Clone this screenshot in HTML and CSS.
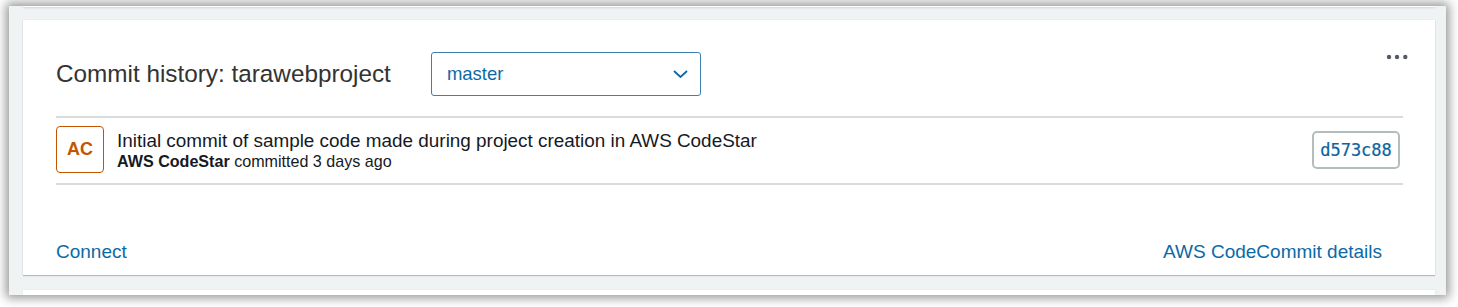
FILE: index.html
```html
<!DOCTYPE html>
<html>
<head>
<meta charset="utf-8">
<link rel="stylesheet" href="styles.css">
</head>
<body>
<div class="frame">
  <div class="prev-card"></div>
  <section class="card">
    <header class="card-header">
      <div class="title-group">
        <h2 class="title">Commit history: tarawebproject</h2>
        <div class="select">
          <span class="select-value">master</span>
          <svg class="chevron" width="15" height="8" viewBox="0 0 15 8"><path d="M1 1 L7.5 7 L14 1" fill="none" stroke="#0b6aa6" stroke-width="1.8"/></svg>
        </div>
      </div>
      <button class="more" aria-label="More">
        <svg width="22" height="6" viewBox="0 0 22 6"><circle cx="3" cy="3" r="2.2" fill="#545b64"/><circle cx="11" cy="3" r="2.2" fill="#545b64"/><circle cx="19.3" cy="3" r="2.2" fill="#545b64"/></svg>
      </button>
    </header>
    <div class="commits">
      <div class="commit">
        <div class="avatar">AC</div>
        <div class="commit-text">
          <div class="commit-msg">Initial commit of sample code made during project creation in AWS CodeStar</div>
          <div class="commit-meta"><strong>AWS CodeStar</strong> committed 3 days ago</div>
        </div>
        <span class="hash">d573c88</span>
      </div>
    </div>
    <footer class="card-footer">
      <a class="link" href="#">Connect</a>
      <a class="link" href="#">AWS CodeCommit details</a>
    </footer>
  </section>
  <section class="next-card"></section>
</div>
</body>
</html>
```
FILE: styles.css
```css
html, body {
  margin: 0;
  padding: 0;
}
body {
  background: #ffffff;
  font-family: "Liberation Sans", Arial, sans-serif;
  padding: 6px 12px 0 9px;
  height: 307px;
  box-sizing: border-box;
  overflow: hidden;
}
.frame {
  width: 1437px;
  height: 289px;
  background: #eff3f4;
  box-shadow: 0 0 10px 3px rgba(0, 0, 0, 0.42);
  overflow: hidden;
  padding: 0 11px 0 14px;
  box-sizing: border-box;
}
.prev-card {
  height: 1px;
  background: #ffffff;
  box-shadow: 0 1px 2px rgba(0, 0, 0, 0.18);
  margin-bottom: 13px;
}
.card {
  background: #ffffff;
  height: 255px;
  box-sizing: border-box;
  padding: 0 32px 0 33px;
  box-shadow: 0 1px 1px rgba(0, 0, 0, 0.22), 0 0 1px rgba(0, 0, 0, 0.12);
}
.card-header {
  display: flex;
  align-items: flex-start;
  justify-content: space-between;
}
.title-group {
  display: flex;
  align-items: center;
  height: 44px;
  margin: 32px 0 20px;
}
.title {
  margin: 0;
  font-size: 24.3px;
  font-weight: normal;
  color: #333333;
  line-height: 28px;
}
.select {
  margin-left: 40px;
  width: 270px;
  height: 44px;
  box-sizing: border-box;
  border: 1px solid #3f7fae;
  border-radius: 3px;
  display: flex;
  align-items: center;
  justify-content: space-between;
  padding: 0 12px 0 15px;
}
.select-value {
  font-size: 18.5px;
  color: #0b6aa6;
}
.chevron {
  display: block;
}
.more {
  border: 0;
  background: none;
  padding: 0;
  margin: 34px -5px 0 0;
  width: 22px;
  height: 6px;
  display: flex;
}
.commits {
  border-top: 2px solid #d9dcdc;
  border-bottom: 2px solid #d9dcdc;
}
.commit {
  display: flex;
  align-items: center;
  padding: 8px 3px 10px 0;
}
.avatar {
  width: 48px;
  height: 47px;
  box-sizing: border-box;
  border: 1px solid #c45500;
  border-radius: 4px;
  color: #c45500;
  font-weight: bold;
  font-size: 18px;
  display: flex;
  align-items: center;
  justify-content: center;
}
.commit-text {
  flex: 1;
  margin-left: 13px;
  color: #16191f;
  padding-top: 3px;
}
.commit-msg {
  font-size: 18.9px;
  line-height: 20px;
}
.commit-meta {
  font-size: 16.1px;
  line-height: 20px;
}
.hash {
  width: 88px;
  height: 38px;
  box-sizing: border-box;
  border: 2px solid #b4bdbe;
  border-radius: 5px;
  font-family: "DejaVu Sans Mono", monospace;
  font-size: 17px;
  color: #0a64a0;
  -webkit-text-stroke: 0.2px #0a64a0;
  display: flex;
  align-items: center;
  justify-content: center;
}
.card-footer {
  display: flex;
  justify-content: space-between;
  margin-top: 56px;
  padding-right: 21px;
}
.link {
  font-size: 19px;
  line-height: 22px;
  color: #0b6aa6;
  text-decoration: none;
}
.next-card {
  background: #ffffff;
  height: 20px;
  margin-top: 15px;
  box-shadow: 0 0 1px rgba(0, 0, 0, 0.12);
}
```
